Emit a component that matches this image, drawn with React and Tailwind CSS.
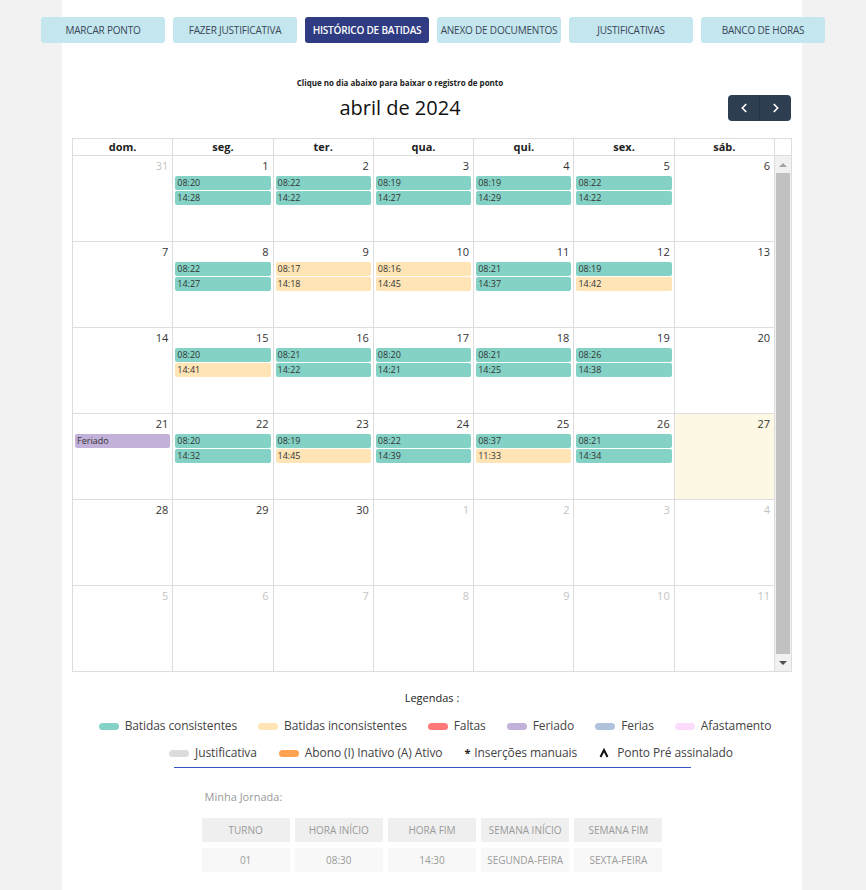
import React from 'react';
import { ChevronLeft, ChevronRight } from 'lucide-react';

const abas = [
  'MARCAR PONTO',
  'FAZER JUSTIFICATIVA',
  'HISTÓRICO DE BATIDAS',
  'ANEXO DE DOCUMENTOS',
  'JUSTIFICATIVAS',
  'BANCO DE HORAS',
];

const diasSemana = ['dom.', 'seg.', 'ter.', 'qua.', 'qui.', 'sex.', 'sáb.'];

// t = consistente, o = inconsistente, f = feriado
const semanas = [
  [
    { d: 31, out: true },
    { d: 1, ev: [['t', '08:20'], ['t', '14:28']] },
    { d: 2, ev: [['t', '08:22'], ['t', '14:22']] },
    { d: 3, ev: [['t', '08:19'], ['t', '14:27']] },
    { d: 4, ev: [['t', '08:19'], ['t', '14:29']] },
    { d: 5, ev: [['t', '08:22'], ['t', '14:22']] },
    { d: 6 },
  ],
  [
    { d: 7 },
    { d: 8, ev: [['t', '08:22'], ['t', '14:27']] },
    { d: 9, ev: [['o', '08:17'], ['o', '14:18']] },
    { d: 10, ev: [['o', '08:16'], ['o', '14:45']] },
    { d: 11, ev: [['t', '08:21'], ['t', '14:37']] },
    { d: 12, ev: [['t', '08:19'], ['o', '14:42']] },
    { d: 13 },
  ],
  [
    { d: 14 },
    { d: 15, ev: [['t', '08:20'], ['o', '14:41']] },
    { d: 16, ev: [['t', '08:21'], ['t', '14:22']] },
    { d: 17, ev: [['t', '08:20'], ['t', '14:21']] },
    { d: 18, ev: [['t', '08:21'], ['t', '14:25']] },
    { d: 19, ev: [['t', '08:26'], ['t', '14:38']] },
    { d: 20 },
  ],
  [
    { d: 21, ev: [['f', 'Feriado']] },
    { d: 22, ev: [['t', '08:20'], ['t', '14:32']] },
    { d: 23, ev: [['t', '08:19'], ['o', '14:45']] },
    { d: 24, ev: [['t', '08:22'], ['t', '14:39']] },
    { d: 25, ev: [['t', '08:37'], ['o', '11:33']] },
    { d: 26, ev: [['t', '08:21'], ['t', '14:34']] },
    { d: 27, hoje: true },
  ],
  [
    { d: 28 },
    { d: 29 },
    { d: 30 },
    { d: 1, out: true },
    { d: 2, out: true },
    { d: 3, out: true },
    { d: 4, out: true },
  ],
  [
    { d: 5, out: true },
    { d: 6, out: true },
    { d: 7, out: true },
    { d: 8, out: true },
    { d: 9, out: true },
    { d: 10, out: true },
    { d: 11, out: true },
  ],
];

const corEvento = {
  t: 'bg-[#84d2c5]',
  o: 'bg-[#ffe4b5]',
  f: 'bg-[#c2b2da]',
};

const legenda1 = [
  ['bg-[#84d2c5]', 'Batidas consistentes'],
  ['bg-[#ffe4b5]', 'Batidas inconsistentes'],
  ['bg-[#ff7878]', 'Faltas'],
  ['bg-[#c2b2da]', 'Feriado'],
  ['bg-[#aec2dc]', 'Ferias'],
  ['bg-[#fddcfb]', 'Afastamento'],
];

const jornadaTopo = ['TURNO', 'HORA INÍCIO', 'HORA FIM', 'SEMANA INÍCIO', 'SEMANA FIM'];
const jornadaLinha = ['01', '08:30', '14:30', 'SEGUNDA-FEIRA', 'SEXTA-FEIRA'];

const Dia = ({ dia }) => (
  <div
    className={`h-[86px] border-r border-b border-[#ddd] ${dia.hoje ? 'bg-[#fcf8e3]' : 'bg-white'}`}
  >
    <div
      className={`h-[20px] pr-[4px] pt-[2px] text-right text-[11px] leading-[16px] ${
        dia.out ? 'text-[#c4c4c4]' : 'text-[#333]'
      }`}
    >
      {dia.d}
    </div>
    {(dia.ev || []).map(([tipo, txt], i) => (
      <div
        key={i}
        className={`mx-[2px] mb-[1px] h-[14px] rounded-[2px] pl-[2px] text-[9px] leading-[14px] text-[#333] ${corEvento[tipo]}`}
      >
        {txt}
      </div>
    ))}
  </div>
);

const App = () => {
  return (
    <div
      className="min-h-[890px] w-full bg-[#f2f2f2] text-[#333]"
      style={{ fontFamily: '"Open Sans", "Noto Sans", sans-serif' }}
    >
      <div className="ml-[62px] min-h-[890px] w-[740px] bg-white pt-[17px]">
        {/* abas */}
        <div className="-ml-[21px] flex w-[784px] gap-[8px]">
          {abas.map((aba) => (
            <div
              key={aba}
              className={`flex h-[26px] w-[124px] items-center justify-center rounded-[3px] text-[10px] tracking-[-0.2px] ${
                aba === 'HISTÓRICO DE BATIDAS'
                  ? 'bg-[#2f3b82] font-semibold text-white'
                  : 'bg-[#c3e6ef] text-[#3b4656]'
              }`}
            >
              {aba}
            </div>
          ))}
        </div>

        {/* cabeçalho do calendário */}
        <div className="ml-[10px] mt-[34px] w-[656px] text-center text-[8px] font-bold leading-[12px] text-[#222]">
          Clique no dia abaixo para baixar o registro de ponto
        </div>
        <div className="ml-[10px] mt-[6px] flex items-center">
          <div className="w-[656px] text-center text-[20px] leading-[26px] text-[#111]">abril de 2024</div>
          <div className="flex h-[26px] w-[63px] overflow-hidden rounded-[4px] bg-[#2c3e50] text-white">
            <div className="flex flex-1 items-center justify-center border-r border-[#26354a]">
              <ChevronLeft size={14} strokeWidth={3} />
            </div>
            <div className="flex flex-1 items-center justify-center">
              <ChevronRight size={14} strokeWidth={3} />
            </div>
          </div>
        </div>

        {/* calendário */}
        <div className="ml-[10px] mt-[17px] w-[720px] border-t border-l border-[#ddd]">
          <div className="flex">
            <div className="grid w-[702px] grid-cols-7">
              {diasSemana.map((d) => (
                <div
                  key={d}
                  className="h-[17px] border-r border-b border-[#ddd] text-center text-[11px] font-bold leading-[16px] text-[#222]"
                >
                  {d}
                </div>
              ))}
            </div>
            <div className="h-[17px] flex-1 border-r border-b border-[#ddd]" />
          </div>
          <div className="flex">
            <div className="grid w-[702px] grid-cols-7">
              {semanas.flat().map((dia, i) => (
                <Dia key={i} dia={dia} />
              ))}
            </div>
            {/* barra de rolagem */}
            <div className="flex h-[516px] flex-1 flex-col border-r border-b border-[#ddd] bg-[#f1f1f1]">
              <div className="flex h-[17px] items-center justify-center">
                <div className="h-0 w-0 border-x-[4px] border-b-[4px] border-x-transparent border-b-[#a3a3a3]" />
              </div>
              <div className="mx-[1px] flex-1 bg-[#c1c1c1]" />
              <div className="flex h-[17px] items-center justify-center">
                <div className="h-0 w-0 border-x-[4px] border-t-[4px] border-x-transparent border-t-[#505050]" />
              </div>
            </div>
          </div>
        </div>

        {/* legendas */}
        <div className="mt-[19px] text-center text-[11px] leading-[14px] text-[#222]">Legendas :</div>
        <div className="mt-[14px] flex justify-center gap-x-[21px] pl-[6px] text-[12px] leading-[14px] tracking-[-0.1px] text-[#444]">
          {legenda1.map(([cor, txt]) => (
            <div key={txt} className="flex items-center gap-[6px]">
              <span className={`h-[7px] w-[20px] rounded-full ${cor}`} />
              {txt}
            </div>
          ))}
        </div>
        <div className="mt-[13px] flex justify-center gap-x-[22px] pl-[38px] text-[12px] leading-[14px] tracking-[-0.1px] text-[#444]">
          <div className="flex items-center gap-[6px]">
            <span className="h-[7px] w-[20px] rounded-full bg-[#dcdcdc]" />
            Justificativa
          </div>
          <div className="flex items-center gap-[6px]">
            <span className="h-[7px] w-[20px] rounded-full bg-[#ffa352]" />
            Abono (I) Inativo (A) Ativo
          </div>
          <div className="flex items-center gap-[4px]">
            <span className="text-[11px] font-bold text-[#222]">*</span>
            Inserções manuais
          </div>
          <div className="flex items-center gap-[8px]">
            <svg width="10" height="10" viewBox="0 0 10 10">
              <path d="M1.5 9 L5 2 L8.5 9" fill="none" stroke="#111" strokeWidth="2" />
            </svg>
            Ponto Pré assinalado
          </div>
        </div>
        <div className="mx-auto mt-[7px] h-[1px] w-[517px] bg-[#3c55c4]" />

        {/* jornada */}
        <div className="mx-auto w-[461px]">
          <div className="mt-[22px] pl-[3px] text-[11px] leading-[14px] text-[#9a9a9a]">Minha Jornada:</div>
          <div className="mt-[14px] grid grid-cols-5 gap-x-[5px] gap-y-[6px] text-center text-[10px] text-[#9a9a9a]">
            {jornadaTopo.map((t) => (
              <div key={t} className="h-[24px] bg-[#efefef] leading-[24px]">
                {t}
              </div>
            ))}
            {jornadaLinha.map((t) => (
              <div key={t} className="h-[24px] bg-[#f8f8f8] leading-[24px]">
                {t}
              </div>
            ))}
          </div>
        </div>
      </div>
    </div>
  );
};

export default App;
